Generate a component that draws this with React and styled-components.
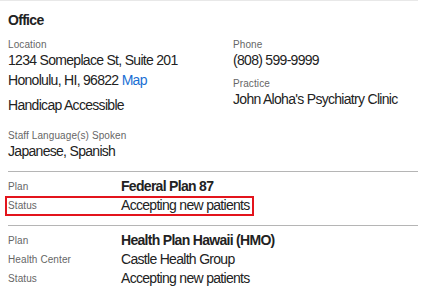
import React from 'react'
import styled, { createGlobalStyle } from 'styled-components'

const GlobalStyle = createGlobalStyle`
  body {
    margin: 0;
    background: #fff;
    font-family: "Liberation Sans", Arial, sans-serif;
  }
`

const plans = [
  {
    name: 'Federal Plan 87',
    rows: [{ label: 'Status', value: 'Accepting new patients', highlight: true }],
  },
  {
    name: 'Health Plan Hawaii (HMO)',
    rows: [
      { label: 'Health Center', value: 'Castle Health Group' },
      { label: 'Status', value: 'Accepting new patients' },
    ],
  },
]

function App() {
  return (
    <>
      <GlobalStyle />
      <Panel>
        <Title>Office</Title>
        <Columns>
          <Column>
            <Field>
              <Label>Location</Label>
              <Value>1234 Someplace St, Suite 201</Value>
              <Value>
                Honolulu, HI, 96822 <MapLink href="#">Map</MapLink>
              </Value>
            </Field>
            <Field $gap={5}>
              <Value>Handicap Accessible</Value>
            </Field>
            <Field $gap={15}>
              <Label>Staff Language(s) Spoken</Label>
              <Value>Japanese, Spanish</Value>
            </Field>
          </Column>
          <Column>
            <Field>
              <Label>Phone</Label>
              <Value>(808) 599-9999</Value>
            </Field>
            <Field $gap={8}>
              <Label>Practice</Label>
              <Value>John Aloha's Psychiatry Clinic</Value>
            </Field>
          </Column>
        </Columns>
        {plans.map((plan) => (
          <PlanSection key={plan.name}>
            <PlanRow>
              <Label>Plan</Label>
              <PlanName>{plan.name}</PlanName>
            </PlanRow>
            {plan.rows.map((row) => (
              <PlanRow key={row.label} $highlight={row.highlight}>
                <Label>{row.label}</Label>
                <Value>{row.value}</Value>
              </PlanRow>
            ))}
          </PlanSection>
        ))}
      </Panel>
    </>
  )
}

export default App

const Panel = styled.div`
  width: 410px;
  padding: 11px 0 0 8px;
  border-top: 2px solid #e8e8e8;
  margin-top: -1px;
  color: #222;
`

const Title = styled.h2`
  margin: 0;
  font-size: 14px;
  line-height: 16px;
  font-weight: 700;
  letter-spacing: -0.7px;
  color: #222;
`

const Columns = styled.div`
  display: grid;
  grid-template-columns: 225px 1fr;
  margin-top: 11px;
`

const Column = styled.div`
  display: flex;
  flex-direction: column;
`

const Field = styled.div`
  margin-top: ${(p) => p.$gap || 0}px;
`

const Label = styled.div`
  font-size: 10px;
  line-height: 11px;
  letter-spacing: 0.1px;
  color: #666;
`

const Value = styled.div`
  font-size: 14px;
  line-height: 20px;
  letter-spacing: -0.7px;
  color: #222;
`

const MapLink = styled.a`
  color: #1a6fd4;
  text-decoration: none;
`

const PlanSection = styled.section`
  border-top: 1px solid #b5b5b5;
  margin-top: 10px;
  padding-top: 5px;
`

const PlanRow = styled.div`
  position: relative;
  display: grid;
  grid-template-columns: 113px auto;
  align-items: start;
  width: fit-content;
  height: 19px;

  ${Label}, ${Value} {
    line-height: 19px;
  }

  ${(p) =>
    p.$highlight &&
    `
    &::after {
      content: "";
      position: absolute;
      top: 0;
      bottom: -1px;
      left: -3px;
      right: -4px;
      border: 2px solid #e3141c;
      pointer-events: none;
    }
  `}
`

const PlanName = styled.div`
  font-size: 14px;
  line-height: 19px;
  font-weight: 700;
  letter-spacing: -0.7px;
  color: #222;
`
